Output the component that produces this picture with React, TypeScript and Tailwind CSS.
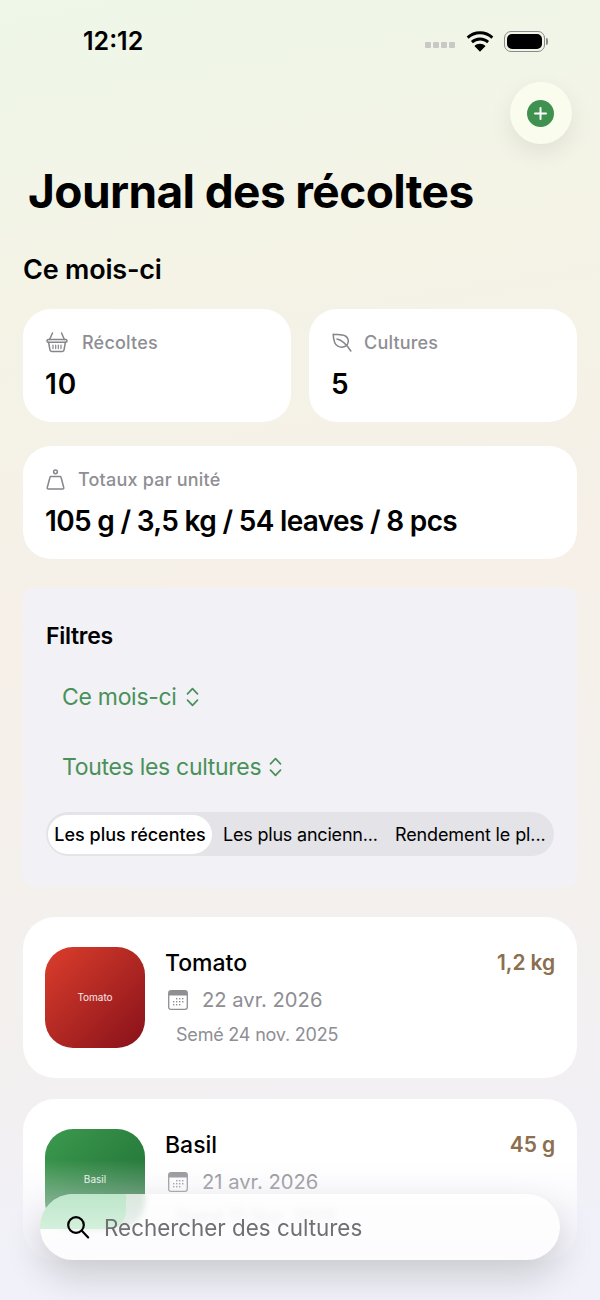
import React from "react";

const BasketIcon = () => (
  <svg width="22" height="21" viewBox="0 0 22 21" fill="none" stroke="#85858a" strokeWidth="1.5" strokeLinecap="round" strokeLinejoin="round">
    <path d="M6.500 1 3.600 7.500M15.500 1 18.400 7.500" />
    <rect x="1" y="7.500" width="20" height="2.800" rx="1.300" />
    <path d="M2.600 10.300 4 18a1.600 1.600 0 0 0 1.600 1.400h10.800A1.600 1.600 0 0 0 18 18l1.400-7.700" />
    <path d="M7 13v3.600M9.700 13v3.600M12.300 13v3.600M15 13v3.600" strokeWidth="1.200" />
  </svg>
);

const LeafIcon = () => (
  <svg width="20" height="19" viewBox="0 0 20 19" fill="none" stroke="#85858a" strokeWidth="1.500" strokeLinecap="round" strokeLinejoin="round">
    <path d="M1.200 1.200c4 .6 8.600-.2 12.200 1.800 3 1.800 3.800 5.600 2 8.400-1.800 2.800-6.200 3.600-9.600 1.800C2.400 11.400 1.400 6 1.200 1.200Z" />
    <path d="M5 6c4 .8 9 4.600 13.800 12" />
  </svg>
);

const WeightIcon = () => (
  <svg width="19" height="21" viewBox="0 0 19 21" fill="none" stroke="#85858a" strokeWidth="1.500" strokeLinecap="round" strokeLinejoin="round">
    <circle cx="9.500" cy="2.800" r="1.900" />
    <path d="M5 7.400h9a1 1 0 0 1 1 .8l2.800 10.500a1 1 0 0 1-1 1.300H2.200a1 1 0 0 1-1-1.300L4 8.200a1 1 0 0 1 1-.8Z" />
  </svg>
);

const CalendarIcon = () => (
  <svg width="20" height="20" viewBox="0 0 20 20" fill="none">
    <rect x="0.700" y="0.700" width="18.600" height="18.600" rx="2.400" stroke="#8e8e93" strokeWidth="1.300" />
    <path d="M1 3a2 2 0 0 1 2-2h14a2 2 0 0 1 2 2v2.600H1Z" fill="#8e8e93" />
    <g fill="#8e8e93">
      <rect x="8" y="8" width="1.400" height="1.400" />
      <rect x="11" y="8" width="1.400" height="1.400" />
      <rect x="14" y="8" width="1.400" height="1.400" />
      <rect x="5" y="11" width="1.400" height="1.400" />
      <rect x="8" y="11" width="1.400" height="1.400" />
      <rect x="11" y="11" width="1.400" height="1.400" />
      <rect x="14" y="11" width="1.400" height="1.400" />
      <rect x="5" y="14" width="1.400" height="1.400" />
      <rect x="8" y="14" width="1.400" height="1.400" />
      <rect x="11" y="14" width="1.400" height="1.400" />
    </g>
  </svg>
);

const UpDownIcon = () => (
  <svg width="13" height="20" viewBox="0 0 13 20" fill="none" stroke="#4a9159" strokeWidth="1.700" strokeLinecap="round" strokeLinejoin="round">
    <path d="M1.500 6.800 6.500 1.600l5 5.200M1.500 13.200l5 5.200 5-5.200" />
  </svg>
);

const WifiIcon = () => (
  <svg width="28" height="21" viewBox="0 0 28 21" fill="#000">
    <path d="M14 3.200c4.400 0 8.400 1.700 11.400 4.500l1.900-2.100A19.400 19.400 0 0 0 14 .3 19.400 19.400 0 0 0 .7 5.600l1.900 2.100A16.500 16.500 0 0 1 14 3.200Z" />
    <path d="M14 9.400c2.700 0 5.200 1 7.100 2.800l2-2.100A13.300 13.300 0 0 0 14 6.500c-3.500 0-6.700 1.300-9.100 3.600l2 2.100A10.400 10.400 0 0 1 14 9.400Z" />
    <path d="M14 12.700c-2.200 0-4.100.9-5.600 2.200l5.600 5.900 5.600-5.900a8.100 8.100 0 0 0-5.600-2.200Z" />
  </svg>
);

const Battery = () => (
  <div className="flex items-center gap-[1px]">
    <div className="w-[41px] h-[21px] rounded-[7px] border border-[#8a8a8a] p-[2px]">
      <div className="w-full h-full rounded-[5px] bg-black" />
    </div>
    <div className="w-[2px] h-[7px] rounded-r-full bg-[#8a8a8a]" />
  </div>
);

const StatCard = ({ icon, label, value, gap, className, valueClass }: { icon: React.ReactNode; label: string; value: string; gap: string; className: string; valueClass?: string }) => (
  <div className={`h-[113px] rounded-[28px] bg-white pl-[23px] pt-[21px] ${className}`}>
    <div className={`flex items-center h-[24px] text-[18px] font-medium tracking-[0.2px] text-[#8e8e93] ${gap}`}>
      {icon}
      <span>{label}</span>
    </div>
    <div className={`mt-[14px] -ml-[1px] h-[32px] leading-[32px] text-[28px] font-semibold text-black ${valueClass ?? ""}`}>{value}</div>
  </div>
);

const HarvestCard = ({ name, date, sown, amount, tile }: { name: string; date: string; sown: string; amount: string; tile: string }) => (
  <div className="h-[161px] rounded-[32px] bg-white pl-[22px] pr-[22px] pt-[30px] flex">
    <div className={`w-[100px] h-[101px] rounded-[28px] flex items-center justify-center text-[10px] text-white/90 ${tile}`}>{name}</div>
    <div className="ml-[20px] flex-1 pt-[1px]">
      <div className="flex justify-between h-[30px] items-center">
        <span className="text-[23px] font-medium text-black">{name}</span>
        <span className="text-[21px] font-semibold tracking-[-0.1px] text-[#8b6f4e]">{amount}</span>
      </div>
      <div className="mt-[8px] h-[28px] flex items-center pl-[3px] gap-[14px] text-[20.200px] text-[#8e8e93]">
        <CalendarIcon />
        <span>{date}</span>
      </div>
      <div className="mt-[9px] h-[24px] leading-[24px] pl-[11px] text-[18px] tracking-[-0.2px] text-[#8e8e93]">{sown}</div>
    </div>
  </div>
);

export default function App() {
  return (
    <div
      className="relative w-[600px] h-[1300px] overflow-hidden bg-[linear-gradient(170deg,#eef7e8_0%,#f4f3e6_22%,#f6f0e8_45%,#f3f0ee_72%,#f0f0fa_100%)] text-black"
      style={{ fontFamily: "Inter, 'Noto Sans', sans-serif" }}
    >
      {/* status bar */}
      <div className="h-[82px] flex items-center justify-between pl-[83px] pr-[52px]">
        <span className="mt-[2px] text-[25px] font-semibold">12:12</span>
        <div className="flex items-center">
          <div className="flex gap-[2px] mr-[11px] mt-[8px]">
            <div className="w-[6px] h-[6px] rounded-[1px] bg-[#c8c8c4]" />
            <div className="w-[6px] h-[6px] rounded-[1px] bg-[#c8c8c4]" />
            <div className="w-[6px] h-[6px] rounded-[1px] bg-[#c8c8c4]" />
            <div className="w-[6px] h-[6px] rounded-[1px] bg-[#c8c8c4]" />
          </div>
          <WifiIcon />
          <div className="ml-[10px]">
            <Battery />
          </div>
        </div>
      </div>

      <div className="flex justify-end pr-[28px]">
        <div className="w-[62px] h-[62px] rounded-full bg-[#fafcee] shadow-[0_8px_24px_rgba(0,0,0,0.08)] flex items-center justify-center">
          <div className="-ml-[1px] w-[27px] h-[27px] rounded-full bg-[#3f9150] flex items-center justify-center">
            <svg width="15" height="15" viewBox="0 0 15 15" stroke="#fff" strokeWidth="2" strokeLinecap="round">
              <path d="M7.500 2v11M2 7.500h11" />
            </svg>
          </div>
        </div>
      </div>

      <h1 className="mt-[20px] pl-[28px] h-[54px] leading-[54px] text-[46px] font-bold tracking-[-0.6px]">Journal des récoltes</h1>

      <div className="px-[23px]">
        <h2 className="mt-[35px] h-[34px] leading-[34px] text-[27px] font-semibold tracking-[-0.2px]">Ce mois-ci</h2>

        <div className="mt-[22px] flex gap-[18px]">
          <StatCard className="w-[268px]" gap="gap-[14px]" valueClass="tracking-[1px]" icon={<BasketIcon />} label="Récoltes" value="10" />
          <StatCard className="flex-1" gap="gap-[12px]" icon={<LeafIcon />} label="Cultures" value="5" />
        </div>

        <div className="mt-[24px]">
          <StatCard className="w-full" gap="gap-[13px]" valueClass="tracking-[-0.68px]" icon={<WeightIcon />} label="Totaux par unité" value="105 g / 3,5 kg / 54 leaves / 8 pcs" />
        </div>

        <div className="mt-[29px] h-[299px] rounded-[10px] bg-[#f1f1f6] px-[23px] pt-[33px]">
          <div className="h-[30px] leading-[30px] text-[23px] font-semibold tracking-[-0.3px]">Filtres</div>
          <div className="mt-[30px] h-[32px] pl-[16px] flex items-center gap-[9px] text-[23px] tracking-[-0.3px] text-[#4a9159]">
            <span>Ce mois-ci</span>
            <UpDownIcon />
          </div>
          <div className="mt-[38px] h-[32px] pl-[16px] flex items-center gap-[8px] text-[23px] tracking-[-0.3px] text-[#4a9159]">
            <span>Toutes les cultures</span>
            <UpDownIcon />
          </div>
          <div className="mt-[29px] h-[44px] rounded-full bg-[#e3e3e8] flex items-center pl-[2px] text-[18px]">
            <div className="w-[164px] h-[39px] rounded-full bg-white flex items-center justify-center font-medium">Les plus récentes</div>
            <div className="ml-[11px] w-[155px] whitespace-nowrap tracking-[-0.2px]">Les plus ancienn...</div>
            <div className="ml-[17px] whitespace-nowrap tracking-[-0.12px]">Rendement le pl...</div>
          </div>
        </div>

        <div className="mt-[30px] flex flex-col gap-[21px]">
          <HarvestCard name="Tomato" date="22 avr. 2026" sown="Semé 24 nov. 2025" amount="1,2 kg" tile="bg-gradient-to-br from-[#dc3e2c] to-[#88101a]" />
          <HarvestCard name="Basil" date="21 avr. 2026" sown="Semé 15 févr. 2026" amount="45 g" tile="bg-gradient-to-br from-[#3c9a4e] to-[#1d6b33]" />
        </div>
      </div>

      {/* fade under the search bar */}
      <div className="absolute inset-x-0 bottom-0 h-[140px] bg-gradient-to-b from-[#f1f1f9]/0 via-[#f1f1f9]/70 to-[#f1f1f9]" />

      <div className="absolute left-[40px] top-[1194px] w-[520px] h-[66px] rounded-[33px] overflow-hidden bg-white/75 backdrop-blur-[3px] flex items-center pl-[26px] gap-[14px]">
        {/* basil tile seen through the glass */}
        <div className="absolute left-0 top-0 w-[86px] h-[35px] rounded-br-[18px] bg-gradient-to-b from-[#bde6ca] to-[#d4f0dc]" />
        <svg className="relative" width="24" height="24" viewBox="0 0 24 24" fill="none" stroke="#000" strokeWidth="2.200" strokeLinecap="round">
          <circle cx="10" cy="10" r="7.800" />
          <path d="m15.800 15.800 6.400 6.600" />
        </svg>
        <span className="relative mt-[2px] text-[22.400px] text-[#6f6f74]">Rechercher des cultures</span>
      </div>
      {/* shadow of the bar sits outside its clipped box */}
      <div className="absolute left-[40px] top-[1194px] w-[520px] h-[66px] rounded-[33px] shadow-[0_16px_36px_rgba(0,0,0,0.16)] pointer-events-none" />
    </div>
  );
}
